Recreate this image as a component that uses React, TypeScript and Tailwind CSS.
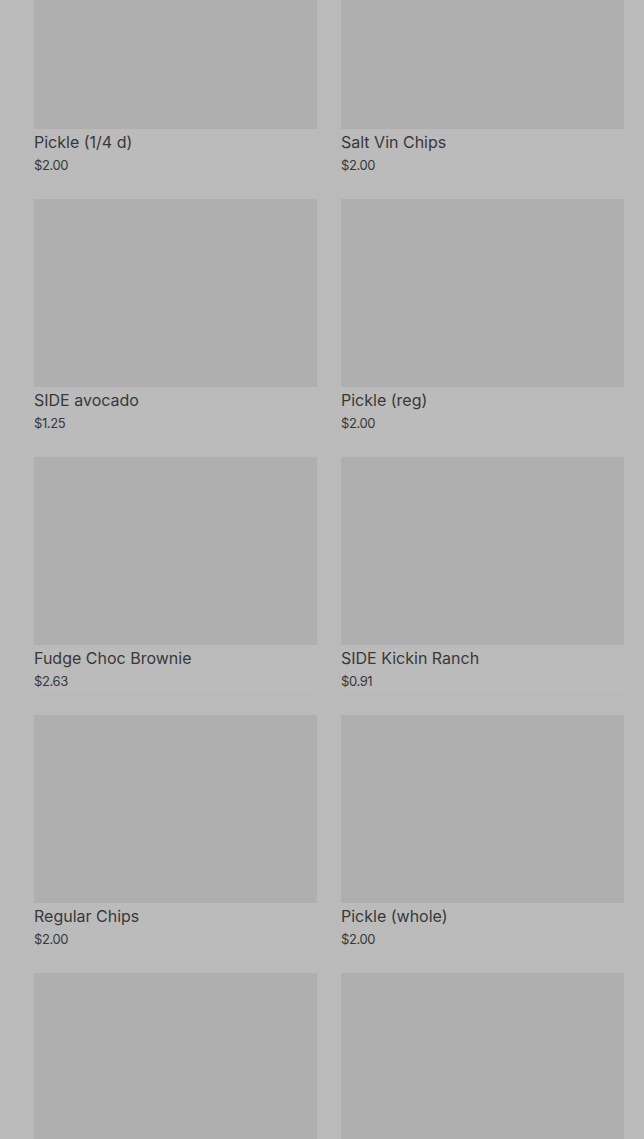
const items = [
  { name: "Pickle (1/4 d)", price: "$2.00" },
  { name: "Salt Vin Chips", price: "$2.00" },
  { name: "SIDE avocado", price: "$1.25" },
  { name: "Pickle (reg)", price: "$2.00" },
  { name: "Fudge Choc Brownie", price: "$2.63" },
  { name: "SIDE Kickin Ranch", price: "$0.91" },
  { name: "Regular Chips", price: "$2.00" },
  { name: "Pickle (whole)", price: "$2.00" },
  { name: "", price: "" },
  { name: "", price: "" },
];

function ItemCard({ name, price }: { name: string; price: string }) {
  return (
    <div className="flex flex-col bg-[#bbbbbb]">
      <div className="h-[188px] w-full bg-[#afafaf]" />
      {name && <div className="pt-px text-[16px] leading-6 text-[#383838]">{name}</div>}
      {price && <div className="mt-px text-[13px] leading-5 tracking-[-0.03em] text-[#383838]">{price}</div>}
    </div>
  );
}

export default function App() {
  return (
    <div
      className="h-[1139px] w-full overflow-hidden bg-[#bababa]"
      style={{ fontFamily: "Inter, 'Noto Sans', sans-serif" }}
    >
      <div className="-mt-[59px] grid grid-cols-2 gap-x-6 gap-y-[24px] pl-[34px] pr-5">
        {items.map((item, idx) => (
          <ItemCard key={`item-${idx}`} name={item.name} price={item.price} />
        ))}
      </div>
    </div>
  );
}
